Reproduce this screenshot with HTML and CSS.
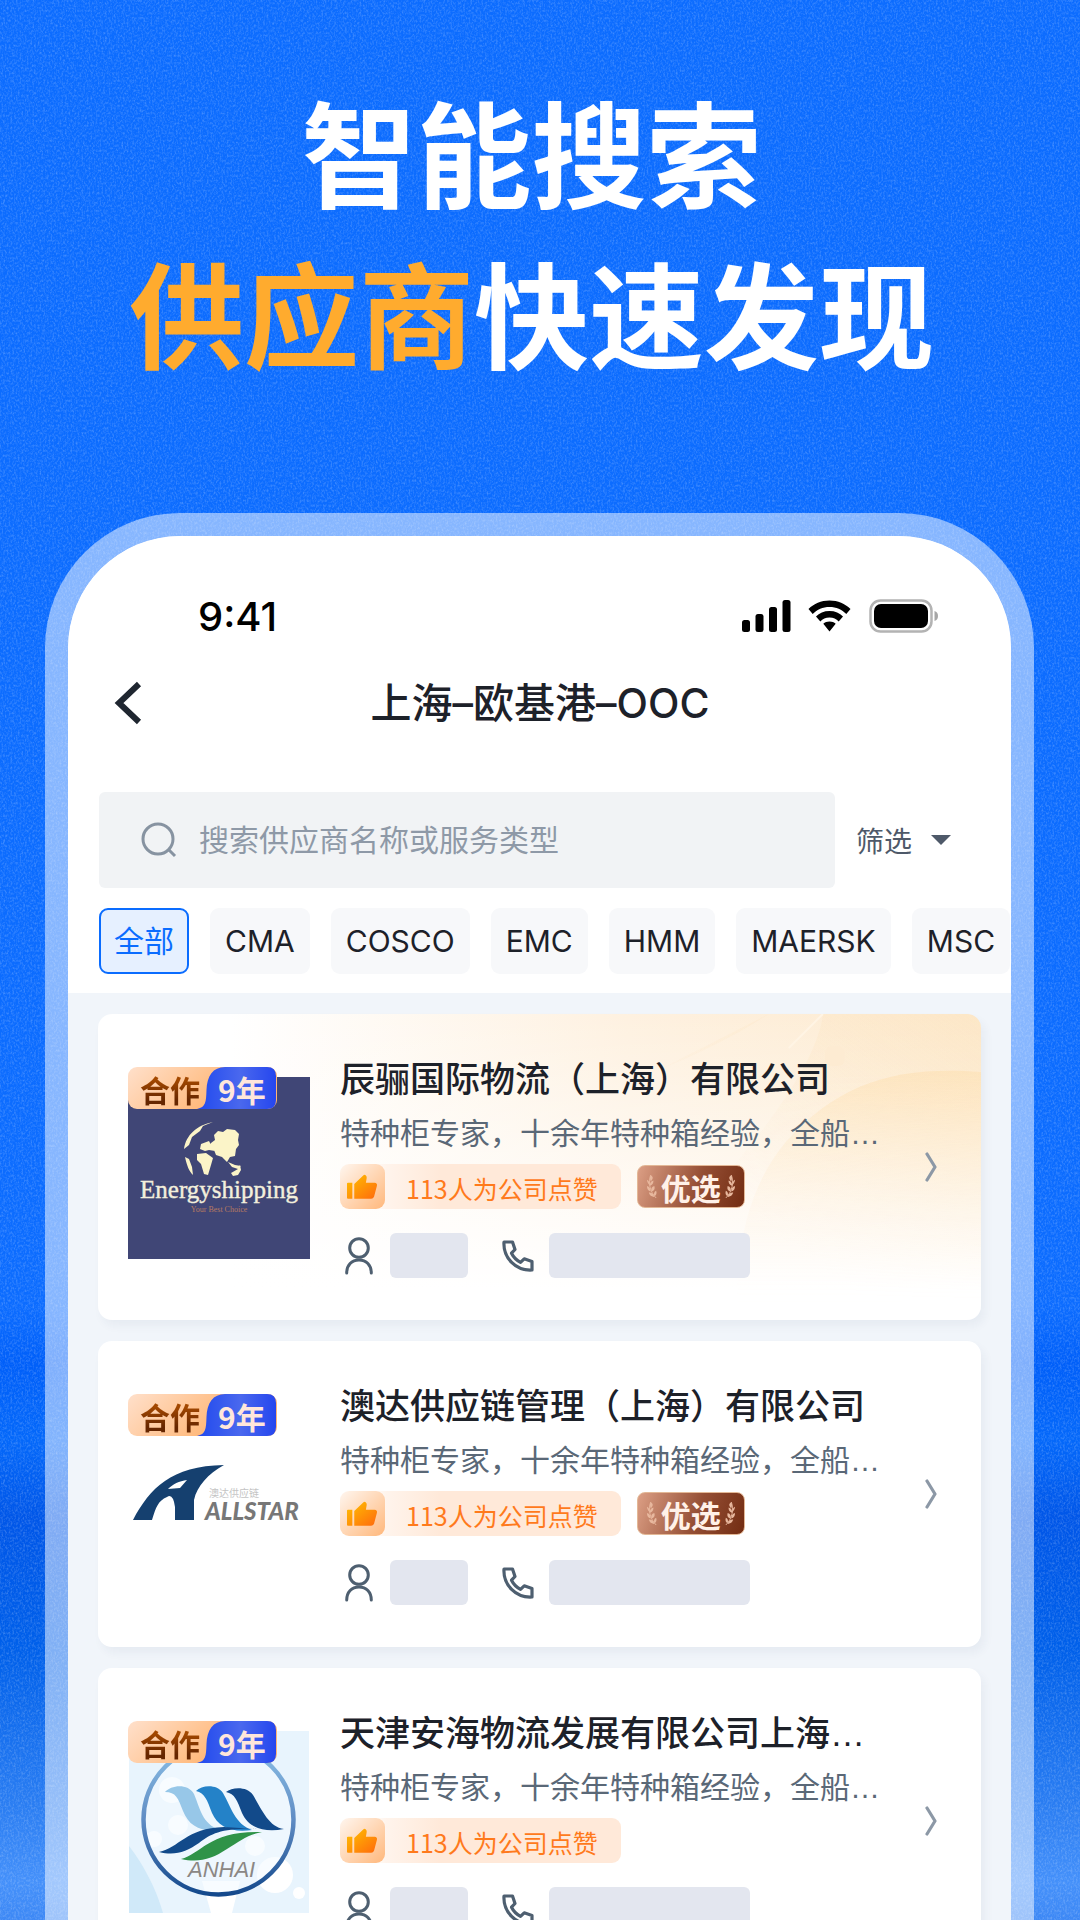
FILE: index.html
```html
<!DOCTYPE html>
<html lang="zh-CN">
<head>
<meta charset="utf-8">
<meta name="viewport" content="width=device-width, initial-scale=1">
<title>智能搜索 供应商快速发现</title>
<link rel="stylesheet" href="styles.css">
</head>
<body>
<svg class="grain" aria-hidden="true">
  <filter id="noise" x="0" y="0" width="100%" height="100%">
    <feTurbulence type="fractalNoise" baseFrequency="0.55 0.4" numOctaves="3" seed="4"/>
    <feColorMatrix values="0 0 0 0 1  0 0 0 0 1  0 0 0 0 1  1.5 0 0 0 -0.62"/>
  </filter>
  <rect width="100%" height="100%" filter="url(#noise)"/>
</svg>

<svg class="sprite" aria-hidden="true">
  <defs>
    <linearGradient id="thumbFill" x1="0" y1="0" x2="1" y2="1"><stop offset="0" stop-color="#ffc300"/><stop offset="1" stop-color="#ff6a0d"/></linearGradient>
    <linearGradient id="yearFill" x1="0" y1="0" x2="1" y2="0"><stop offset="0" stop-color="#2049ee"/><stop offset=".55" stop-color="#4a68ee"/><stop offset="1" stop-color="#2546ee"/></linearGradient>
    <linearGradient id="ringFill" x1="0" y1="0" x2="0" y2="1"><stop offset="0" stop-color="#8cc0e6"/><stop offset=".5" stop-color="#5f8cc4"/><stop offset="1" stop-color="#14498c"/></linearGradient>
    <symbol id="thumb" viewBox="0 0 32 26"><path fill="url(#thumbFill)" d="M0 9.500q0-1 1-1h4.500v16.500H1q-1 0-1-1zM7.500 10 17 .8q1.200-1 2.500.2 1.200 1.200.8 3L19.500 8.500h9q3 .3 2.400 3.200l-3 11.300q-.8 2-3 2H7.500z"/></symbol>
    <symbol id="person" viewBox="0 0 28 38"><g fill="none" stroke="#4e5f70" stroke-width="3" stroke-linecap="round"><circle cx="14" cy="11" r="9.300"/><path d="M1.700 36c0-8 5-13 12.300-13s12.300 5 12.300 13"/></g></symbol>
    <symbol id="phone" viewBox="0 0 32 32"><path fill="none" stroke="#4e5f70" stroke-width="3.200" stroke-linejoin="round" d="M2 2h8.500l2.500 7.500-3.500 3.700c2 4 5 7 9 9.200l3.700-3.600 7.800 2.700V30C14 31 1 18 2 2z"/></symbol>
    <symbol id="chevron" viewBox="0 0 12 32"><path fill="none" stroke="#8c98a6" stroke-width="3.200" stroke-linecap="round" stroke-linejoin="round" d="M2 3 10 16 2 29"/></symbol>
    <symbol id="year" viewBox="0 0 80 42"><path fill="url(#yearFill)" d="M0 42c9-2 9-7 9.500-19C10 9 16 0 28 0h42q9 0 9 9v24q0 9-9 9z"/></symbol>
    <symbol id="laurel" viewBox="0 0 12 28"><path fill="none" stroke="currentColor" stroke-width="1" d="M4 1c-3 8-1 18 6 25"/><path fill="currentColor" d="M4 1c3 2 3 4 0 7-1-3-1-5 0-7zM0 6c2 1 3 3 3 6C1 10 0 8 0 6zM3 13c4-2 4-4 4-6-3 1-4 3-4 6zM0 13c3 1 4 3 4 6-3-1-4-3-4-6zM5 19c3-1 4-3 3-6-3 1-4 3-3 6zM2 20c3 0 5 1 6 5-4-1-5-2-6-5zM8 24c2-1 3-3 2-6-2 1-3 3-2 6z"/></symbol>
  </defs>
</svg>

<div class="poster">
  <h1 class="headline">智能搜索<br><span class="accent">供应商</span>快速发现</h1>

  <main class="phone">
    <div class="top">
      <div class="status">
        <span class="time">9:41</span>
        <svg class="status-icons" viewBox="0 0 196 34" aria-hidden="true">
          <g><rect x="0" y="21" width="8" height="12" rx="2.500"/><rect x="13.500" y="15" width="8" height="18" rx="2.500"/><rect x="27" y="8" width="8" height="25" rx="2.500"/><rect x="40.500" y="1" width="8" height="32" rx="2.500"/></g>
          <path d="M87.500 1.500c8.500 0 15.500 3.200 21 8.500l-4.200 5c-4.500-4.500-10-7-16.800-7s-12.300 2.500-16.800 7l-4.200-5c5.500-5.300 12.500-8.500 21-8.500zM87.500 12c5.500 0 10.300 2 13.500 5.500l-4.300 5c-2.400-2.500-5.300-4-9.200-4s-6.800 1.500-9.200 4l-4.300-5C77.200 14 82 12 87.500 12zM87.500 22.500c2.500 0 4.600.8 6.200 2.300L87.500 32.500l-6.200-7.700c1.600-1.500 3.700-2.300 6.200-2.300z"/>
          <rect x="128.500" y="1.500" width="61" height="31" rx="10" fill="none" stroke="#b3b3b3" stroke-width="2.500"/>
          <rect x="132" y="5" width="54" height="24" rx="7"/>
          <path fill="#a6a6a6" d="M192.500 12q3.500 1 3.500 5t-3.500 5z"/>
        </svg>
      </div>

      <header class="nav">
        <button class="back" aria-label="返回"><svg viewBox="0 0 28 44"><path d="M25 3 5 22l20 19" fill="none" stroke="#1f2630" stroke-width="6"/></svg></button>
        <h2 class="title">上海–欧基港–OOC</h2>
      </header>

      <div class="search-row">
        <label class="search">
          <svg viewBox="0 0 36 36" aria-hidden="true"><circle cx="17" cy="17" r="15" /><path d="m28 28 6 6"/></svg>
          <input type="search" placeholder="搜索供应商名称或服务类型" aria-label="搜索供应商名称或服务类型">
        </label>
        <button class="filter">筛选<span class="caret"></span></button>
      </div>

      <div class="chips">
        <button class="chip active">全部</button>
        <button class="chip">CMA</button>
        <button class="chip">COSCO</button>
        <button class="chip">EMC</button>
        <button class="chip">HMM</button>
        <button class="chip">MAERSK</button>
        <button class="chip">MSC</button>
      </div>
    </div>

    <div class="list">
      <article class="card featured">
        <svg class="glow" viewBox="0 0 882 306" preserveAspectRatio="none" aria-hidden="true">
          <defs>
            <linearGradient id="band" x1="1" y1="0" x2="0" y2="1"><stop offset="0" stop-color="#fde0b4" stop-opacity=".6"/><stop offset=".6" stop-color="#fde0b4" stop-opacity="0"/></linearGradient>
            <linearGradient id="disc" x1="0" y1="0" x2="0" y2="1"><stop offset="0" stop-color="#fddfb0" stop-opacity=".55"/><stop offset="1" stop-color="#fff0d8" stop-opacity=".1"/></linearGradient>
          </defs>
          <path fill="url(#band)" d="M670 0h212v306H450C600 220 720 60 724 0L670 0C640 20 600 40 560 56z" opacity=".5"/>
          <path fill="url(#disc)" d="M882 58c-80-6-140 8-195 70-38 45-52 110-48 178h243z"/>
          <path fill="none" stroke="#fff4e4" stroke-width="2" d="M724 0 690 34"/>
          <rect x="726" y="32" width="20" height="20" rx="7" fill="#fdebd2"/>
        </svg>
        <div class="logo-wrap">
          <svg class="logo" viewBox="0 0 182 182" role="img" aria-label="Energyshipping">
            <rect width="182" height="182" fill="#404676"/>
            <g fill="#fbf4c8">
              <path d="M85 45c-16 3-27 13-29 27l5-4 3-8 8-6 3-5zM57 80c2 9 4 14 8 18l-1-8-3-8z"/>
              <path d="M90 54l5 1 4-3 8 1 4 4-1 6 1 5-3 4-1 7-5 1-3 5-5-5-6-2-2-5-6-1 3-6 4-3-1-5zM73 67l8-3 2 4 5 2-1 4-6-1-4 1-5-2zM69 77l9-1 7 5-2 7-3 10-4-1-3-10-4-4zM103 96l7-4 2-4 1 5-3 5-5 1zM100 85l7 3 6 1-3 3-6-2z"/>
            </g>
            <text class="energy" x="91" y="121" text-anchor="middle">Energyshipping</text>
            <text class="energy-sub" x="91" y="135" text-anchor="middle">Your Best Choice</text>
          </svg>
          <div class="badge"><svg><use href="#year"/></svg><span class="coop">合作</span><span class="years">9年</span></div>
        </div>
        <div class="info">
          <h3 class="name">辰骊国际物流（上海）有限公司</h3>
          <p class="desc">特种柜专家，十余年特种箱经验，全船…</p>
          <div class="tags">
            <span class="likes"><span class="thumb"><svg><use href="#thumb"/></svg></span>113人为公司点赞</span>
            <span class="pick"><svg><use href="#laurel"/></svg>优选<svg class="flip"><use href="#laurel"/></svg></span>
          </div>
          <div class="contact"><svg class="person"><use href="#person"/></svg><span class="mask short"></span><svg class="tel"><use href="#phone"/></svg><span class="mask"></span></div>
        </div>
        <svg class="go" aria-hidden="true"><use href="#chevron"/></svg>
      </article>

      <article class="card">
        <div class="logo-wrap">
          <svg class="logo" viewBox="0 8 182 182" role="img" aria-label="Allstar">
            <path fill="#15406f" fill-rule="evenodd" d="M5 124C22 92 43 70 96 69c-16 9-27 21-30 35v20H47v-13q-2-14-8-10c-9 4-11 10-15 23zM40 93l12-1 7-8c-8 1-14 4-19 9z"/>
            <text class="allstar-sub" x="81" y="101">澳达供应链</text>
            <text class="allstar" x="77" y="124">ALLSTAR</text>
          </svg>
          <div class="badge"><svg><use href="#year"/></svg><span class="coop">合作</span><span class="years">9年</span></div>
        </div>
        <div class="info">
          <h3 class="name">澳达供应链管理（上海）有限公司</h3>
          <p class="desc">特种柜专家，十余年特种箱经验，全船…</p>
          <div class="tags">
            <span class="likes"><span class="thumb"><svg><use href="#thumb"/></svg></span>113人为公司点赞</span>
            <span class="pick"><svg><use href="#laurel"/></svg>优选<svg class="flip"><use href="#laurel"/></svg></span>
          </div>
          <div class="contact"><svg class="person"><use href="#person"/></svg><span class="mask short"></span><svg class="tel"><use href="#phone"/></svg><span class="mask"></span></div>
        </div>
        <svg class="go" aria-hidden="true"><use href="#chevron"/></svg>
      </article>

      <article class="card">
        <div class="logo-wrap">
          <svg class="logo" viewBox="0 0 182 182" role="img" aria-label="Anhai">
            <rect x="1" width="180" height="182" fill="#e8f4fd"/>
            <path fill="#d0e9f9" d="M1 115c14 18 27 42 34 67H1z"/>
            <path fill="#fff" d="M74 150h38l-8 32H83z"/>
            <g fill="#fff"><circle cx="44" cy="59" r="13"/><circle cx="50" cy="94" r="10"/><circle cx="26" cy="108" r="8"/><circle cx="127" cy="115" r="10"/><circle cx="147" cy="144" r="18"/><circle cx="171" cy="162" r="6"/></g>
            <circle cx="90.500" cy="88.500" r="75" fill="#f3faff" fill-opacity=".55" stroke="url(#ringFill)" stroke-width="4.500"/>
            <path fill="#97c7e8" d="M37 61c6-7 23-9 29 2 6 14 8 30 26 36-20 2-31-4-37-19-5-13-7-19-18-19z"/>
            <path fill="#2482c8" d="M68 60c6-6 21-7 27 2 8 14 12 31 29 37-20 3-34-3-40-17-5-13-7-20-16-22z"/>
            <path fill="#124a8a" d="M98 61c6-5 21-6 27 3 9 15 16 32 31 34-21 4-36-2-42-16-5-13-7-19-16-21z"/>
            <path fill="#124a8a" d="M31 121c20-4 27-24 65-25l33 2c-34-1-45 4-58 14-13 9-24 13-40 9z"/>
            <path fill="#2f9348" d="M53 128c20-5 29-29 81-27-15 3-22 9-35 17-15 10-28 14-46 10z"/>
            <text class="anhai" x="60" y="146">ANHAI</text>
          </svg>
          <div class="badge"><svg><use href="#year"/></svg><span class="coop">合作</span><span class="years">9年</span></div>
        </div>
        <div class="info">
          <h3 class="name">天津安海物流发展有限公司上海…</h3>
          <p class="desc">特种柜专家，十余年特种箱经验，全船…</p>
          <div class="tags">
            <span class="likes"><span class="thumb"><svg><use href="#thumb"/></svg></span>113人为公司点赞</span>
          </div>
          <div class="contact"><svg class="person"><use href="#person"/></svg><span class="mask short"></span><svg class="tel"><use href="#phone"/></svg><span class="mask"></span></div>
        </div>
        <svg class="go" aria-hidden="true"><use href="#chevron"/></svg>
      </article>
    </div>
  </main>
</div>
</body>
</html>
```
FILE: styles.css
```css
* {
  box-sizing: border-box;
  margin: 0;
}

body {
  position: relative;
  height: 100vh;
  overflow: hidden;
  font-family: Inter, "Noto Sans CJK SC", sans-serif;
  color: #1d2129;
  background: linear-gradient(#0c6cff 0%, #0c6cff 68%, #005ff9 71%, #0468fa 75%, #0056e8 79%, #0060ea 86%, #2a7df2 94%, #4490fa 98%, #3d88f5 100%);
}

button {
  padding: 0;
  border: 0;
  background: none;
  color: inherit;
  font: inherit;
}

.grain {
  position: absolute;
  inset: 0;
  width: 100%;
  height: 100%;
  opacity: .3;
}

.sprite {
  position: absolute;
  width: 0;
  height: 0;
}

.poster {
  position: relative;
  display: flex;
  flex-direction: column;
  gap: 122px;
  padding: 69px 46px 0 45px;
}

.headline {
  padding-right: 16px;
  font-family: "Noto Sans CJK SC", sans-serif;
  font-size: 115px;
  font-weight: 700;
  line-height: 161px;
  text-align: center;
  white-space: nowrap;
  color: #fff;
}

.accent {
  color: #ffab2e;
}

.phone {
  border: 23px solid rgba(255, 255, 255, .5);
  border-bottom: 0;
  border-radius: 135px 135px 0 0;
  background: #f1f5fa padding-box;
  overflow: hidden;
}

.top {
  padding: 63px 0 19px 31px;
  background: #fff;
}

.status {
  display: flex;
  justify-content: space-between;
  align-items: center;
  height: 34px;
  padding: 0 73px 0 99px;
}

.time {
  font-size: 40px;
  font-weight: 500;
  color: #000;
}

.status-icons {
  width: 196px;
  height: 34px;
}

.nav {
  display: grid;
  grid-template-columns: 60px 1fr 60px;
  align-items: center;
  margin-top: 46px;
  padding-right: 30px;
}

.back {
  padding-left: 15px;
  text-align: left;
}

.back svg {
  display: block;
  width: 28px;
  height: 44px;
}

.title {
  font-size: 41px;
  font-weight: 500;
  line-height: 48px;
  text-align: center;
}

.search-row {
  display: flex;
  align-items: center;
  gap: 21px;
  margin-top: 65px;
  padding-right: 60px;
}

.search {
  flex: 1;
  display: flex;
  align-items: center;
  gap: 22px;
  height: 96px;
  padding: 0 42px;
  border-radius: 6px;
  background: #f1f3f5;
}

.search svg {
  flex: none;
  width: 36px;
  height: 36px;
  fill: none;
  stroke: #8793a1;
  stroke-width: 3;
}

.search input {
  flex: 1;
  min-width: 0;
  padding: 0;
  border: 0;
  outline: 0;
  background: none;
  font: inherit;
  font-size: 30px;
}

.search input::placeholder {
  color: #8e99a7;
}

.filter {
  display: flex;
  align-items: center;
  gap: 19px;
  font-size: 28px;
  color: #4e5969;
}

.caret {
  border: 10px solid transparent;
  border-top-color: #4e5969;
  border-bottom: 0;
}

.chips {
  display: flex;
  gap: 21px;
  margin-top: 20px;
  overflow: hidden;
}

.chip {
  flex: none;
  height: 66px;
  padding: 0 15px;
  border-radius: 9px;
  background: #f7f8fa;
  font-size: 30px;
}

.chip.active {
  padding: 0 13px 4px;
  border: 2px solid #0a6cff;
  background: #e6f0ff;
  color: #0a6cff;
}

.list {
  display: flex;
  flex-direction: column;
  gap: 21px;
  padding: 21px 30px;
}

.card {
  position: relative;
  display: flex;
  gap: 30px;
  padding: 42px 44px 42px 30px;
  border-radius: 14px;
  background: #fff;
  box-shadow: 4px 6px 10px rgba(40, 60, 100, .05);
}

.featured {
  background: linear-gradient(to bottom, rgba(255, 255, 255, 0), #fff 90%), linear-gradient(to right, #fff 15%, #fef1e0 60%, #fdeacf);
}

.glow {
  position: absolute;
  inset: 0;
  width: 100%;
  height: 100%;
  border-radius: 14px;
  mask-image: linear-gradient(#000 20%, transparent 95%);
}

.logo-wrap {
  position: relative;
  flex: none;
  width: 182px;
  padding-top: 21px;
}

.logo {
  display: block;
  width: 182px;
  height: 182px;
}

.energy {
  font: 25px "Liberation Serif", serif;
  fill: #f3efdc;
  stroke: #f3efdc;
  stroke-width: .4px;
}

.energy-sub {
  font: 8px "Liberation Serif", serif;
  fill: #b77a62;
}

.allstar {
  font: italic 900 24px Lato, sans-serif;
  fill: #777;
}

.allstar-sub {
  font: 10px "Noto Sans CJK SC", sans-serif;
  fill: #c4c4c4;
}

.anhai {
  font: italic 22px "Liberation Sans", sans-serif;
  fill: #8b8784;
}

.badge {
  position: absolute;
  top: 11px;
  left: 0;
  display: flex;
  gap: 18px;
  width: 149px;
  padding-left: 12px;
  border-radius: 9px;
  background: linear-gradient(135deg, #ffe0cb, #ffb675 65%);
  font-family: "Noto Sans CJK SC", sans-serif;
  font-size: 30px;
  font-weight: 700;
  line-height: 44px;
  height: 42px;
}

.badge svg {
  position: absolute;
  top: 0;
  right: 0;
  width: 80px;
  height: 42px;
}

.badge span {
  position: relative;
}

.coop {
  background: linear-gradient(#a34800 30%, #662600 80%);
  background-clip: text;
  color: transparent;
}

.years {
  color: #ffe6da;
}

.info {
  position: relative;
  flex: 1;
  min-width: 0;
}

.name,
.desc {
  font-family: "Liberation Sans", "Noto Sans CJK SC", sans-serif;
  white-space: nowrap;
}

.name {
  font-size: 35px;
  font-weight: 500;
  line-height: 48px;
}

.desc {
  margin-top: 8px;
  font-size: 30px;
  line-height: 44px;
  color: #5a6877;
}

.tags {
  display: flex;
  align-items: center;
  gap: 16px;
  height: 45px;
  margin-top: 8px;
}

.likes {
  display: flex;
  gap: 21px;
  padding-right: 23px;
  border-radius: 9px;
  background: linear-gradient(to right, transparent 30px, #fff4ec 46px, #ffe9d9 100px);
  font-family: "Noto Sans CJK SC", sans-serif;
  font-size: 25px;
  line-height: 48px;
  height: 45px;
  color: #ff7a1c;
}

.thumb {
  display: grid;
  place-items: center;
  width: 45px;
  height: 45px;
  border-radius: 9px;
  background: linear-gradient(135deg, #fff6ef, #ffb87c);
}

.thumb svg {
  width: 31px;
  height: 26px;
}

.pick {
  display: flex;
  align-items: center;
  justify-content: center;
  gap: 3px;
  width: 108px;
  height: 43px;
  border: 1px solid #e3b896;
  border-radius: 8px;
  background: linear-gradient(110deg, #dc9f85, #954f35 55%, #722c12);
  font-family: "Noto Sans CJK SC", sans-serif;
  font-size: 30px;
  font-weight: 700;
  line-height: 40px;
  color: #fff1e8;
}

.pick svg {
  width: 11px;
  height: 26px;
  color: #e8b89e;
}

.pick .flip {
  transform: scaleX(-1);
}

.contact {
  display: flex;
  align-items: center;
  margin-top: 24px;
  padding-left: 5px;
}

.person {
  width: 28px;
  height: 38px;
}

.tel {
  width: 32px;
  height: 32px;
  margin-left: 34px;
}

.mask {
  width: 201px;
  height: 45px;
  margin-left: 15px;
  border-radius: 6px;
  background: #e3e6ef;
}

.mask.short {
  width: 78px;
  margin-left: 17px;
}

.go {
  position: relative;
  align-self: center;
  flex: none;
  width: 12px;
  height: 32px;
}
```
